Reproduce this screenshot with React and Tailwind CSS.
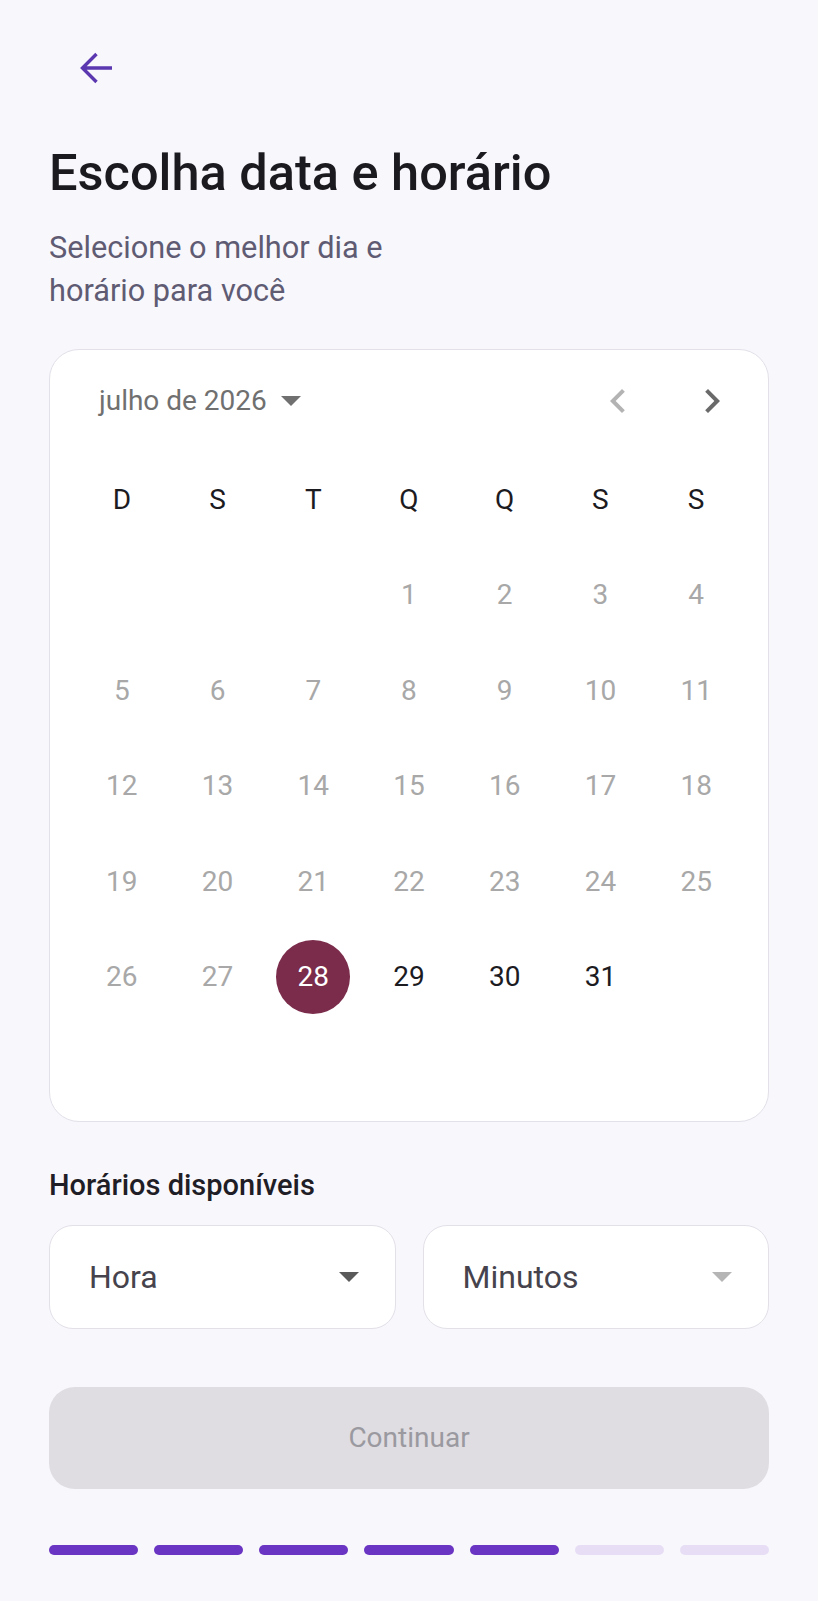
const weekdays = ["D", "S", "T", "Q", "Q", "S", "S"];

function buildCells() {
  const cells = [];
  for (let i = 0; i < 3; i++) cells.push(null);
  for (let d = 1; d <= 31; d++) cells.push(d);
  while (cells.length < 42) cells.push(null);
  return cells;
}

function DropTriangle({ color }) {
  return (
    <svg width="20" height="10" viewBox="0 0 20 10">
      <path d="M0 0h20L10 10z" fill={color} />
    </svg>
  );
}

function Select({ label, arrow }) {
  return (
    <div className="flex h-[104px] items-center justify-between rounded-[24px] border-[1.5px] border-[#e3e0e8] bg-white pl-[39px] pr-[36px]">
      <span className="text-[32px] text-[#46434d]">{label}</span>
      <DropTriangle color={arrow} />
    </div>
  );
}

export default function App() {
  const cells = buildCells();
  const steps = [1, 1, 1, 1, 1, 0, 0];

  return (
    <main
      className="min-h-screen bg-[#f8f7fc] px-[49px] pb-10"
      style={{ fontFamily: "Roboto, 'Noto Sans', sans-serif" }}
    >
      <div className="pt-[44px] pl-[23px]">
        <button className="flex h-12 w-12 items-center justify-center">
          <svg width="48" height="48" viewBox="0 0 48 48" fill="none">
            <path
              d="M40 24H11M24.5 10L10.5 24l14 14"
              stroke="#5b37b0"
              strokeWidth="3.4"
            />
          </svg>
        </button>
      </div>

      <h1 className="mt-[51px] text-[50.5px] font-medium leading-[60px] text-[#1b1a1f]">
        Escolha data e horário
      </h1>
      <p className="mt-[23px] text-[30.7px] leading-[43px] text-[#5f5b73]">
        Selecione o melhor dia e
        <br />
        horário para você
      </p>

      <section className="mt-[37px] rounded-[30px] border-[1.5px] border-[#e3e0e9] bg-white px-[24px]">
        <div className="flex h-[102px] items-center justify-between">
          <div className="flex items-center gap-[14px] pl-[25px]">
            <span className="text-[28px] text-[#707070]">julho de 2026</span>
            <DropTriangle color="#707070" />
          </div>
          <div className="flex items-center gap-[46px] pr-[8px]">
            <button className="flex h-12 w-12 items-center justify-center">
              <svg width="48" height="48" viewBox="0 0 24 24">
                <path d="M15.41 7.41L14 6l-6 6 6 6 1.41-1.41L10.83 12z" fill="#b3b3b3" />
              </svg>
            </button>
            <button className="flex h-12 w-12 items-center justify-center">
              <svg width="48" height="48" viewBox="0 0 24 24">
                <path d="M10 6L8.59 7.41 13.17 12l-4.58 4.59L10 18l6-6z" fill="#6a6a6a" />
              </svg>
            </button>
          </div>
        </div>

        <div className="grid grid-cols-7">
          {weekdays.map((w, i) => (
            <div key={i} className="flex h-[95.5px] items-center justify-center text-[28px] text-[#1c1b1f]">
              {w}
            </div>
          ))}
          {cells.map((d, i) => (
            <div key={i} className="flex h-[95.5px] items-center justify-center">
              {d === 28 ? (
                <span className="flex h-[74px] w-[74px] items-center justify-center rounded-full bg-[#7b2c4b] text-[28px] text-white">
                  28
                </span>
              ) : d ? (
                <span className={`text-[28px] ${d > 28 ? "text-[#1c1b1f]" : "text-[#a8a8a8]"}`}>{d}</span>
              ) : null}
            </div>
          ))}
        </div>
      </section>

      <h2 className="mt-[45px] text-[29px] font-medium leading-[36px] text-[#1f1d25]">
        Horários disponíveis
      </h2>

      <div className="mt-[22px] grid grid-cols-2 gap-[27px]">
        <Select label="Hora" arrow="#5a5a5a" />
        <Select label="Minutos" arrow="#b5b5b5" />
      </div>

      <button className="mt-[58px] flex h-[102px] w-full items-center justify-center rounded-[26px] bg-[#dfdde2] text-[28px] text-[#9b99a0]">
        Continuar
      </button>

      <div className="mt-[56px] flex gap-[16px]">
        {steps.map((s, i) => (
          <div key={i} className={`h-[10px] flex-1 rounded-full ${s ? "bg-[#6a35c2]" : "bg-[#e7def6]"}`} />
        ))}
      </div>
    </main>
  );
}
